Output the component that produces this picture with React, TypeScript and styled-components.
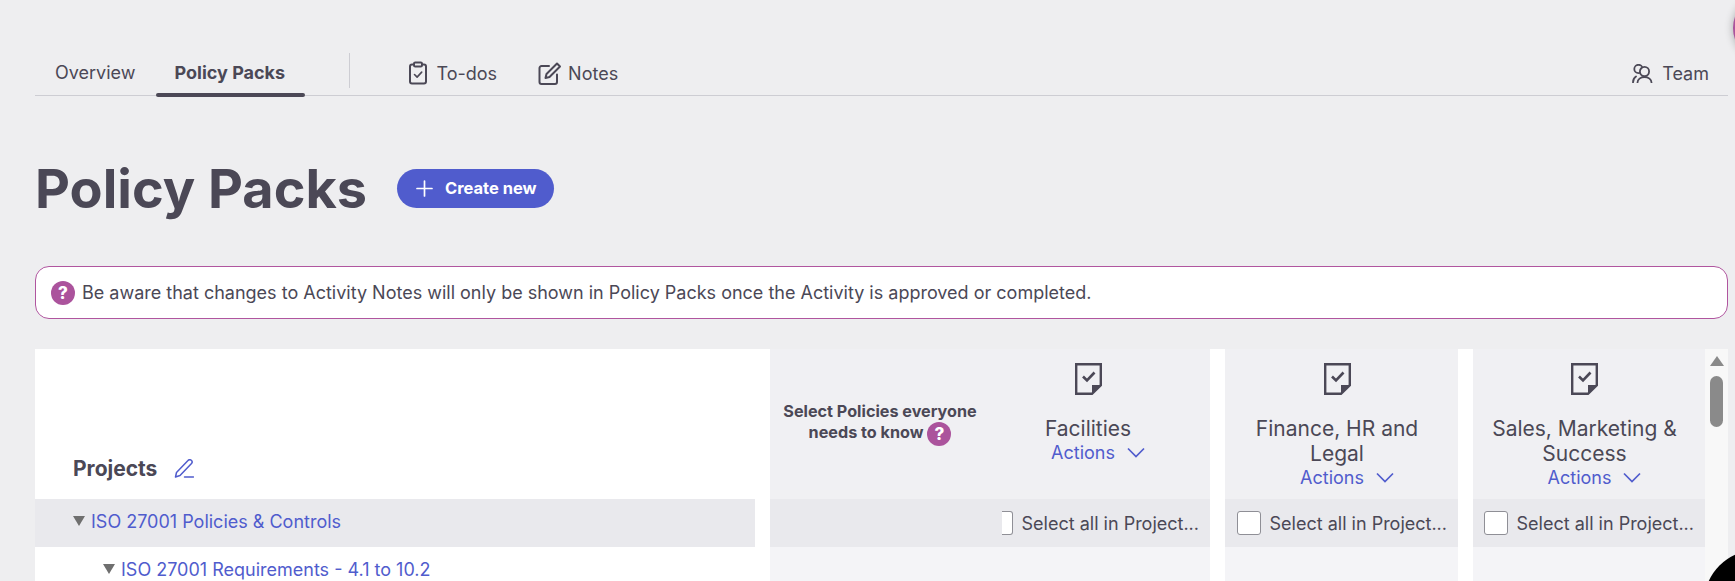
import styled, { createGlobalStyle } from "styled-components";

const GlobalStyle = createGlobalStyle`
  html, body {
    margin: 0;
    height: 581px;
    overflow: hidden;
    background: #eeeef0;
  }
  * {
    box-sizing: border-box;
  }
`;

const Page = styled.div`
  position: relative;
  width: 1735px;
  height: 581px;
  overflow: hidden;
  padding: 53px 7px 0 35px;
  font-family: "Inter", sans-serif;
  font-size: 18px;
  color: #4b4856;
`;

const Nav = styled.nav`
  display: flex;
  align-items: flex-start;
  height: 43px;
  border-bottom: 1px solid #cdcdd3;
`;

const Tab = styled.div<{ $active?: boolean }>`
  position: relative;
  height: 42px;
  line-height: 40px;
  padding: 0 21px 0 20px;
  font-weight: ${(p) => (p.$active ? 700 : 400)};
  white-space: nowrap;
  ${(p) =>
    p.$active &&
    `
    width: 149px;
    padding: 0 18px;
    &::after {
      content: "";
      position: absolute;
      left: 0;
      right: 0;
      bottom: -2px;
      height: 4px;
      border-radius: 2px;
      background: #4b4856;
    }
  `}
`;

const NavDivider = styled.div`
  width: 1px;
  height: 35px;
  margin: 0 58px 0 44px;
  background: #cdcdd3;
`;

const NavLink = styled.div<{ $gap?: number }>`
  display: flex;
  align-items: center;
  gap: ${(p) => p.$gap ?? 8}px;
  height: 40px;
  margin-right: 41px;
  white-space: nowrap;
`;

const NavRight = styled(NavLink)`
  margin-left: auto;
  margin-right: 19px;
`;

const TitleRow = styled.div`
  display: flex;
  align-items: center;
  height: 72px;
  margin-top: 56px;
`;

const Title = styled.h1`
  margin: 2px 30px 0 0;
  font-size: 54px;
  line-height: 64px;
  font-weight: 700;
  color: #4b4856;
  white-space: nowrap;
`;

const CreateButton = styled.button`
  display: flex;
  align-items: center;
  gap: 12px;
  width: 157px;
  height: 39px;
  padding: 0 0 0 19px;
  border: 0;
  border-radius: 20px;
  background: #505ccd;
  color: #fff;
  font-family: inherit;
  font-size: 16.5px;
  font-weight: 700;
  white-space: nowrap;
`;

const Alert = styled.div`
  display: flex;
  align-items: center;
  gap: 7px;
  height: 53px;
  margin-top: 42px;
  padding: 0 15px;
  background: #fff;
  border: 1px solid #b0559f;
  border-radius: 14px;
`;

const HelpDot = styled.span`
  display: inline-flex;
  flex: none;
  align-items: center;
  justify-content: center;
  width: 24px;
  height: 24px;
  border-radius: 50%;
  background: #ab539c;
  color: #fff;
  font-size: 17px;
  font-weight: 800;
  vertical-align: middle;
`;

const Table = styled.div`
  display: grid;
  grid-template-columns: 720px 455px 248px 247px 23px;
  grid-template-rows: 150px 48px 1fr;
  height: 232px;
  margin-top: 30px;
  background: #fff;
`;

const ProjectsHead = styled.div`
  display: flex;
  align-items: center;
  gap: 17px;
  padding: 89px 0 0 38px;
  font-size: 21px;
  font-weight: 700;
  white-space: nowrap;
`;

const ColHead = styled.div`
  display: flex;
  margin-left: 15px;
  background: #f0f0f3;
  padding-top: 14px;
`;

const EveryoneLabel = styled.div`
  flex: none;
  width: 220px;
  padding-top: 38px;
  text-align: center;
  font-size: 16.2px;
  line-height: 21px;
  font-weight: 700;
`;

const TeamHead = styled.div<{ $padRight: number }>`
  flex: 1;
  display: flex;
  flex-direction: column;
  align-items: center;
  min-width: 0;
  padding-right: ${(p) => p.$padRight}px;
`;

const TeamName = styled.div`
  max-width: 205px;
  margin-top: 21px;
  font-size: 21px;
  line-height: 25px;
  text-align: center;
`;

const Actions = styled.div`
  display: flex;
  align-items: center;
  gap: 12px;
  margin-left: 20px;
  line-height: 23px;
  color: #505ccd;
`;

const Scrollbar = styled.div`
  grid-column: 5;
  grid-row: 1 / 4;
  background: #f8f8f8;
`;

const ScrollArrow = styled.div`
  width: 0;
  height: 0;
  margin: 7px auto 0;
  border-left: 7px solid transparent;
  border-right: 7px solid transparent;
  border-bottom: 10px solid #8a8a8a;
`;

const ScrollThumb = styled.div`
  width: 13px;
  height: 51px;
  margin: 10px auto 0;
  border-radius: 7px;
  background: #8a8a8a;
`;

const ProjectRow = styled.div<{ $indent: number; $grey?: boolean }>`
  display: flex;
  align-items: center;
  gap: 6px;
  height: 48px;
  padding: 0 0 3px ${(p) => p.$indent}px;
  background: ${(p) => (p.$grey ? "#e9e9ed" : "#fff")};
  color: #505ccd;
  white-space: nowrap;
`;

const Caret = styled.span`
  flex: none;
  margin-top: -2px;
  width: 0;
  height: 0;
  border-left: 6px solid transparent;
  border-right: 6px solid transparent;
  border-top: 10px solid #6f6f6f;
`;

const SelectCell = styled.div`
  display: flex;
  align-items: center;
  justify-content: flex-end;
  gap: 9px;
  overflow: hidden;
  margin-left: 15px;
  padding-right: 11px;
  background: #e9e9ed;
  white-space: nowrap;
`;

const CheckBox = styled.span<{ $clipped?: boolean }>`
  flex: none;
  width: ${(p) => (p.$clipped ? 11 : 24)}px;
  height: 24px;
  background: #fff;
  border: 1px solid #8f8f96;
  border-left-width: ${(p) => (p.$clipped ? 0 : 1)}px;
  border-radius: ${(p) => (p.$clipped ? "0 3px 3px 0" : "3px")};
`;

const EmptyCell = styled.div`
  margin-left: 15px;
  background: #f4f4f7;
`;

const PinkBubble = styled.div`
  position: absolute;
  left: 1733px;
  top: -6px;
  width: 68px;
  height: 68px;
  border-radius: 50%;
  background: #ab539c;
  box-shadow: 0 0 8px rgba(0, 0, 0, 0.3);
`;

const BlackBubble = styled.div`
  position: absolute;
  left: 1704px;
  top: 550px;
  width: 106px;
  height: 106px;
  border-radius: 50%;
  background: #000;
`;

const ClipboardIcon = () => (
  <svg width="20" height="24" viewBox="0 0 20 24" fill="none" stroke="#4b4856" strokeWidth="2" strokeLinejoin="round" strokeLinecap="round">
    <rect x="2" y="3.5" width="16" height="19" rx="2" />
    <rect x="6" y="1.5" width="8" height="4" rx="1.2" fill="#eeeef0" />
    <path d="M6.5 13.5l2.6 2.6 4.6-5" strokeWidth="1.6" />
  </svg>
);

const NotesIcon = () => (
  <svg width="24" height="23" viewBox="0 0 24 23" fill="none" stroke="#4b4856" strokeWidth="2" strokeLinejoin="round" strokeLinecap="round">
    <path d="M11 4H3.5A2 2 0 0 0 1.5 6v14a2 2 0 0 0 2 2h13.5a2 2 0 0 0 2-2v-7.5" />
    <path d="M19 1.5l3 3L11.5 15l-4 1 1-4z" />
  </svg>
);

const TeamIcon = () => (
  <svg width="21" height="19" viewBox="0 0 21 19" fill="none" stroke="#4b4856" strokeWidth="1.8" strokeLinecap="round">
    <circle cx="6.500" cy="5" r="4.200" />
    <circle cx="12.500" cy="7.500" r="4.600" fill="#eeeef0" />
    <path d="M1 18.500c0-2.800 1-4.800 3-6" />
    <path d="M5.500 18.500c0-3 3-5.500 7-5.500s7 2.500 7 5.500" />
  </svg>
);

const PlusIcon = () => (
  <svg width="17" height="17" viewBox="0 0 17 17" stroke="#fff" strokeWidth="1.7" strokeLinecap="round" style={{ flex: "none" }}>
    <path d="M8.500 1v15M1 8.500h15" />
  </svg>
);

const EditIcon = () => (
  <svg width="20" height="19" viewBox="0 0 20 19" fill="none" stroke="#505ccd" strokeWidth="1.5" strokeLinejoin="round" strokeLinecap="round">
    <path d="M14 1.500a2.200 2.200 0 0 1 3.500 3L6 16.500l-4.500 1.500 1-4.500z" />
    <path d="M10.500 18h9" />
  </svg>
);

const PolicyIcon = () => (
  <svg width="27" height="32" viewBox="0 0 27 32" style={{ flex: "none" }}>
    <path d="M1.200 1.200h24.600v21L17 30.800H1.200z" fill="none" stroke="#4b4856" strokeWidth="2.400" />
    <path d="M17 31v-9h9z" fill="#4b4856" />
    <path d="M8 13.500l4 4 7.500-8" fill="none" stroke="#4b4856" strokeWidth="2.600" />
  </svg>
);

const ChevronIcon = () => (
  <svg width="18" height="11" viewBox="0 0 18 11" fill="none" stroke="#505ccd" strokeWidth="1.700">
    <path d="M1 1.500l8 8 8-8" />
  </svg>
);

const teamColumns = [
  { name: "Facilities", padRight: 24 },
  { name: "Finance, HR and Legal", padRight: 9 },
  { name: "Sales, Marketing & Success", padRight: 9 },
];

const TeamColumn = ({ name, padRight }: { name: string; padRight: number }) => (
  <TeamHead $padRight={padRight}>
    <PolicyIcon />
    <TeamName>{name}</TeamName>
    <Actions>
      Actions
      <ChevronIcon />
    </Actions>
  </TeamHead>
);

export default function App() {
  return (
    <Page>
      <GlobalStyle />
      <Nav>
        <Tab>Overview</Tab>
        <Tab $active>Policy Packs</Tab>
        <NavDivider />
        <NavLink>
          <ClipboardIcon />
          To-dos
        </NavLink>
        <NavLink $gap={6}>
          <NotesIcon />
          Notes
        </NavLink>
        <NavRight $gap={9}>
          <TeamIcon />
          Team
        </NavRight>
      </Nav>

      <TitleRow>
        <Title>Policy Packs</Title>
        <CreateButton>
          <PlusIcon />
          Create new
        </CreateButton>
      </TitleRow>

      <Alert>
        <HelpDot>?</HelpDot>
        Be aware that changes to Activity Notes will only be shown in Policy Packs once the Activity is approved or completed.
      </Alert>

      <Table>
        <ProjectsHead>
          Projects
          <EditIcon />
        </ProjectsHead>
        <ColHead>
          <EveryoneLabel>
            Select Policies everyone needs to know <HelpDot>?</HelpDot>
          </EveryoneLabel>
          <TeamColumn {...teamColumns[0]} />
        </ColHead>
        <ColHead>
          <TeamColumn {...teamColumns[1]} />
        </ColHead>
        <ColHead>
          <TeamColumn {...teamColumns[2]} />
        </ColHead>
        <Scrollbar>
          <ScrollArrow />
          <ScrollThumb />
        </Scrollbar>

        <ProjectRow $indent={38} $grey>
          <Caret />
          ISO 27001 Policies &amp; Controls
        </ProjectRow>
        <SelectCell>
          <CheckBox $clipped />
          Select all in Project...
        </SelectCell>
        <SelectCell>
          <CheckBox />
          Select all in Project...
        </SelectCell>
        <SelectCell>
          <CheckBox />
          Select all in Project...
        </SelectCell>

        <ProjectRow $indent={68}>
          <Caret />
          ISO 27001 Requirements - 4.1 to 10.2
        </ProjectRow>
        <EmptyCell />
        <EmptyCell />
        <EmptyCell />
      </Table>
      <PinkBubble />
      <BlackBubble />
    </Page>
  );
}
